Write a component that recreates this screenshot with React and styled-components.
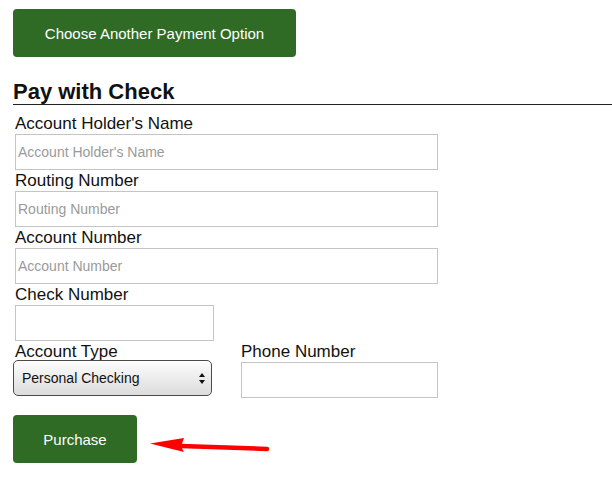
import React from "react";
import styled, { createGlobalStyle } from "styled-components";

const GlobalStyle = createGlobalStyle`
  html, body {
    margin: 0;
    padding: 0;
    background: #fff;
  }
  body {
    font-family: "Liberation Sans", Arial, Helvetica, sans-serif;
    color: #111;
  }
`;

const green = "#2f6b25";

const Page = styled.div`
  padding: 9px 0 0 13px;
  width: 599px;
`;

const GreenButton = styled.button`
  display: block;
  width: ${(p) => p.$w}px;
  height: 48px;
  padding: 0;
  border: none;
  border-radius: 4px;
  background: ${green};
  color: #fff;
  font-family: "Liberation Sans", Arial, sans-serif;
  font-size: 15px;
  cursor: pointer;
`;

const Heading = styled.h2`
  margin: 23px 0 0;
  font-size: 22px;
  line-height: 24px;
  font-weight: bold;
  color: #111;
  border-bottom: 1px solid #222;
`;

const Form = styled.form`
  padding: 8px 0 0 2px;
  width: 423px;
`;

const Label = styled.label`
  display: block;
  font-size: 17px;
  line-height: 21px;
  height: ${(p) => p.$h || 21}px;
  color: #111;
`;

const TextInput = styled.input`
  display: block;
  box-sizing: border-box;
  width: ${(p) => p.$w || 423}px;
  height: 36px;
  margin: 0;
  padding: 0 2px;
  border: 1px solid #c4c4c4;
  font-family: "Liberation Sans", Arial, sans-serif;
  font-size: 14px;
  color: #333;
  outline: none;
  &::placeholder {
    color: #9a9a9a;
  }
`;

const Row = styled.div`
  display: grid;
  grid-template-columns: 226px 197px;
`;

const Col = styled.div`
  display: flex;
  flex-direction: column;
`;

const SelectBox = styled.div`
  position: relative;
  box-sizing: border-box;
  width: 199px;
  height: 36px;
  margin: 0 0 0 -2px;
  border: 1px solid #4a4a4a;
  border-radius: 5px;
  background: linear-gradient(#fdfdfd, #e9e9e9 60%, #dcdcdc);
  box-shadow: inset 0 1px 0 #fff;
  display: flex;
  align-items: center;
  padding: 0 8px;
  select {
    appearance: none;
    border: none;
    background: transparent;
    font-family: "Liberation Sans", Arial, sans-serif;
    font-size: 14px;
    color: #111;
    width: 100%;
    padding: 0;
    outline: none;
  }
`;

const Caret = styled.svg`
  position: absolute;
  right: 6px;
  top: 12px;
  pointer-events: none;
`;

const PhoneInput = styled(TextInput)`
  margin-top: 2px;
`;

const Actions = styled.div`
  display: flex;
  align-items: flex-start;
  margin-top: 17px;
`;

const Arrow = styled.svg`
  margin: 19px 0 0 11px;
  overflow: visible;
`;

export default function App() {
  return (
    <>
      <GlobalStyle />
      <Page>
        <GreenButton type="button" $w={283}>Choose Another Payment Option</GreenButton>
        <Heading>Pay with Check</Heading>
        <Form onSubmit={(e) => e.preventDefault()}>
          <Label>Account Holder's Name</Label>
          <TextInput placeholder="Account Holder's Name" />
          <Label>Routing Number</Label>
          <TextInput placeholder="Routing Number" />
          <Label>Account Number</Label>
          <TextInput placeholder="Account Number" />
          <Label>Check Number</Label>
          <TextInput $w={199} />
          <Row>
            <Col>
              <Label $h={19}>Account Type</Label>
              <SelectBox>
                <select defaultValue="personal">
                  <option value="personal">Personal Checking</option>
                  <option value="business">Business Checking</option>
                  <option value="savings">Savings</option>
                </select>
                <Caret width="6" height="11" viewBox="0 0 6 11">
                  <path d="M3 0 L6 4 L0 4 Z" fill="#111" />
                  <path d="M0 7 L6 7 L3 11 Z" fill="#111" />
                </Caret>
              </SelectBox>
            </Col>
            <Col>
              <Label $h={19}>Phone Number</Label>
              <PhoneInput $w={197} />
            </Col>
          </Row>
        </Form>
        <Actions>
          <GreenButton type="button" $w={124}>Purchase</GreenButton>
          <Arrow width="122" height="20" viewBox="0 0 122 20">
            <path d="M2 9.5 L36 4 L33 12.5 L36 18 Z" fill="#ff0000" />
            <line x1="33" y1="12" x2="119" y2="15" stroke="#ff0000" strokeWidth="4.5" strokeLinecap="round" />
          </Arrow>
        </Actions>
      </Page>
    </>
  );
}
